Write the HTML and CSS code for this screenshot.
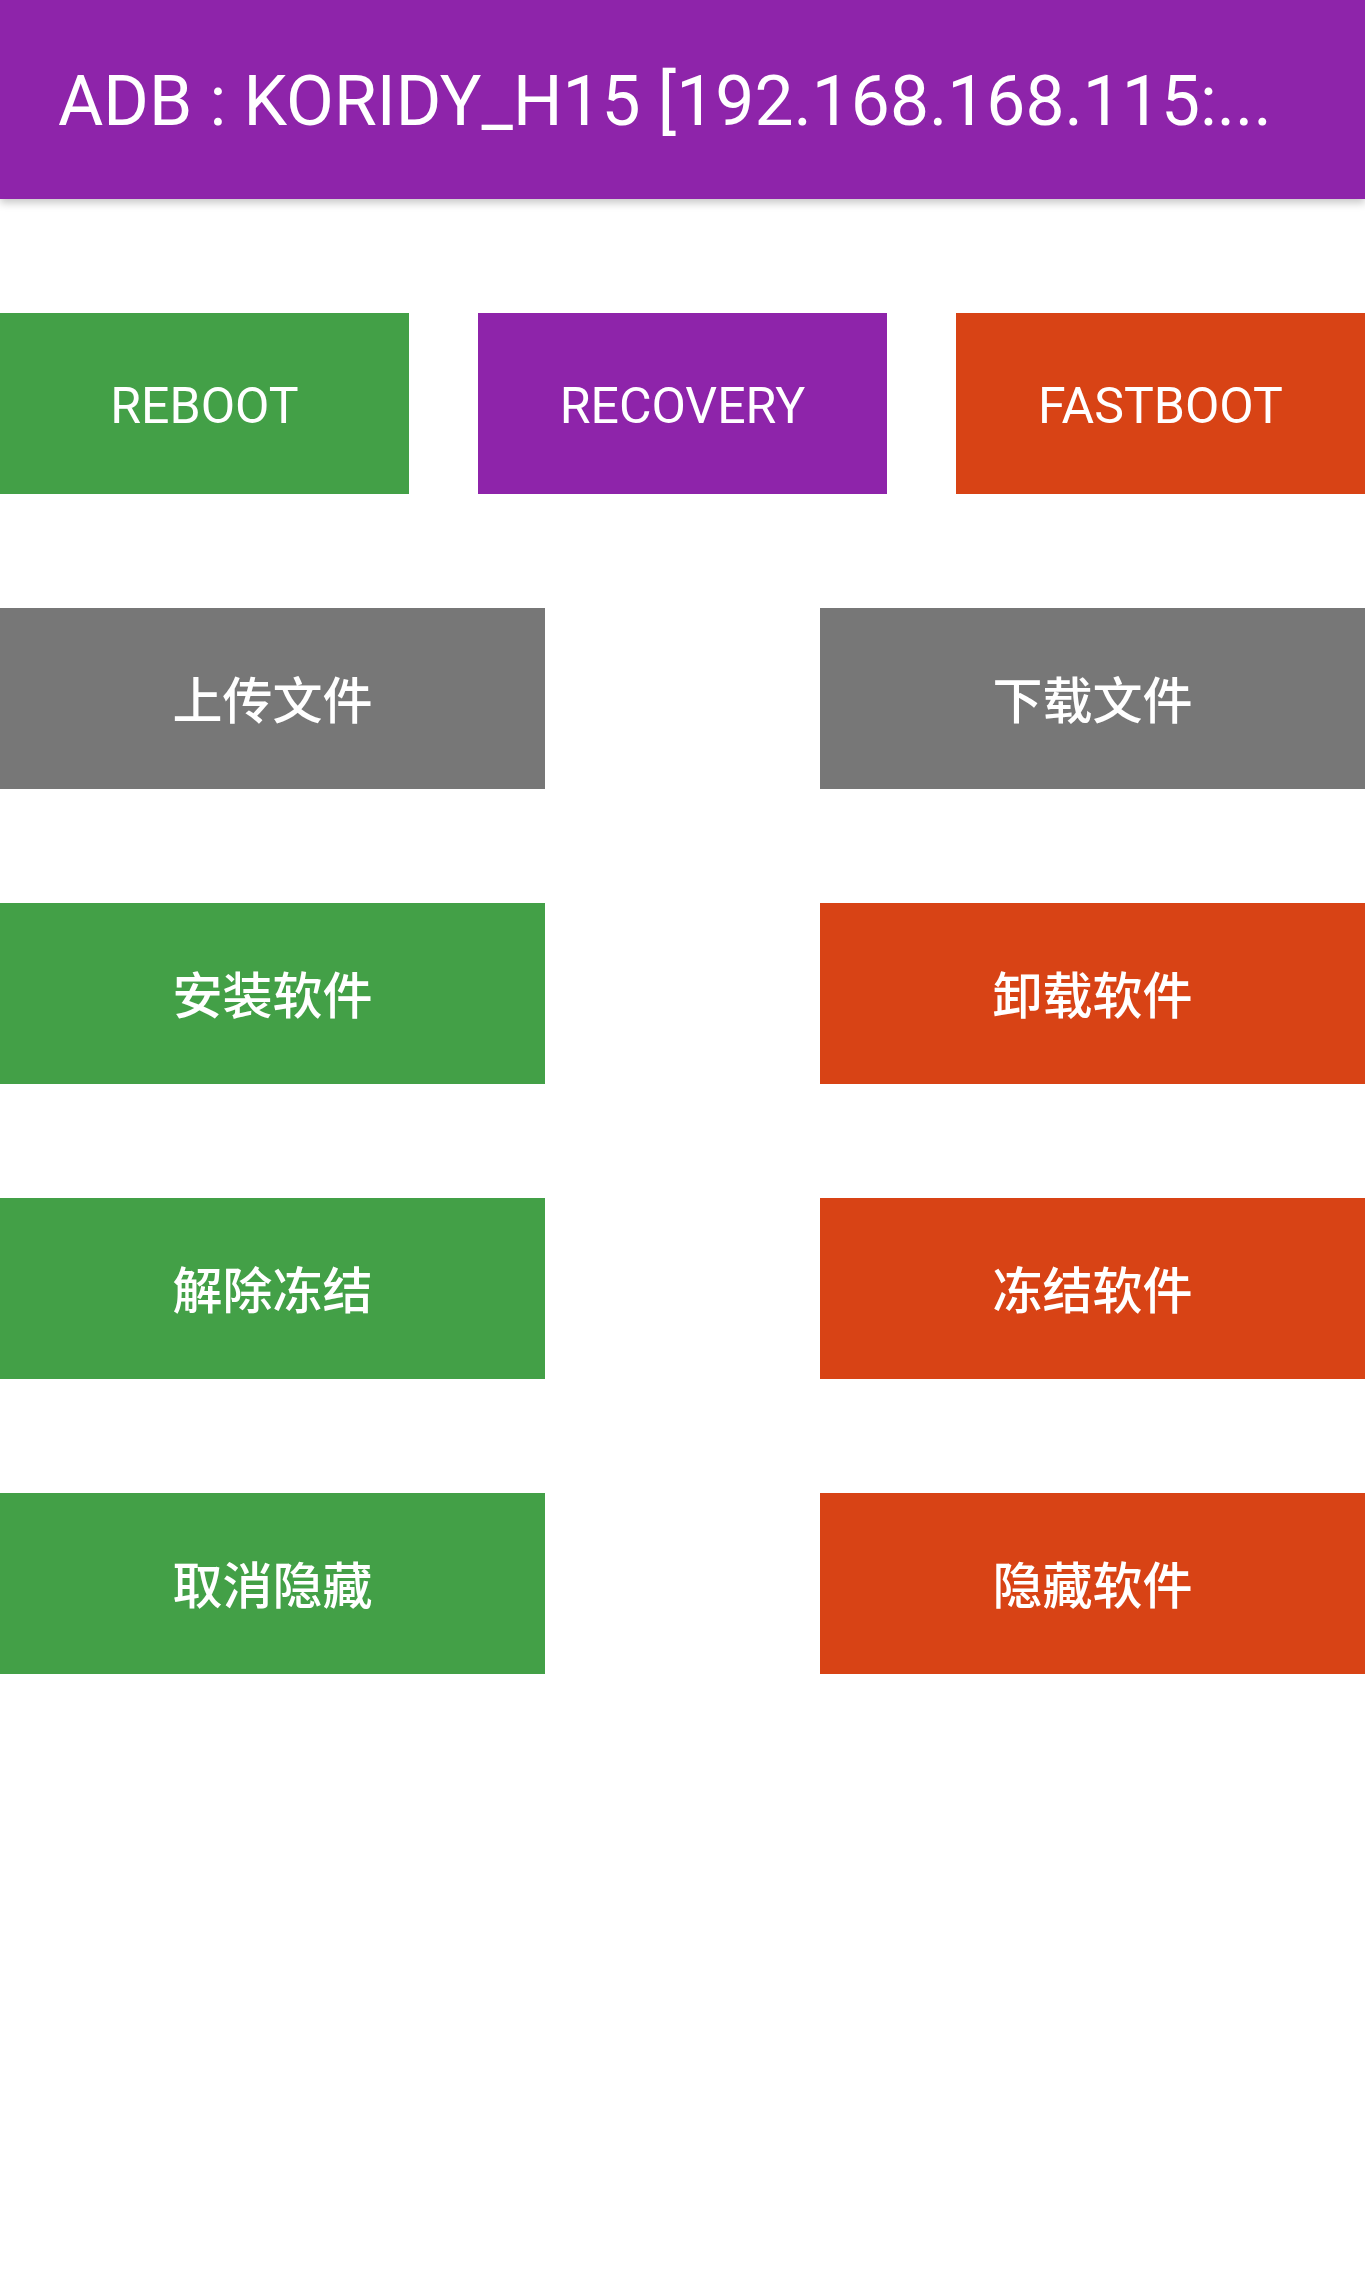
FILE: index.html
```html
<!DOCTYPE html>
<html lang="zh">
<head>
<meta charset="utf-8">
<title>ADB</title>
<link rel="stylesheet" href="styles.css">
</head>
<body>
<header class="appbar">
  <h1 class="appbar-title">ADB : KORIDY_H15 [192.168.168.115:...</h1>
</header>
<main class="content">
  <div class="row row-3">
    <button class="btn green">REBOOT</button>
    <button class="btn purple">RECOVERY</button>
    <button class="btn orange">FASTBOOT</button>
  </div>
  <div class="row row-2">
    <button class="btn gray cjk">上传文件</button>
    <button class="btn gray cjk">下载文件</button>
  </div>
  <div class="row row-2">
    <button class="btn green cjk">安装软件</button>
    <button class="btn orange cjk">卸载软件</button>
  </div>
  <div class="row row-2">
    <button class="btn green cjk">解除冻结</button>
    <button class="btn orange cjk">冻结软件</button>
  </div>
  <div class="row row-2">
    <button class="btn green cjk">取消隐藏</button>
    <button class="btn orange cjk">隐藏软件</button>
  </div>
</main>
</body>
</html>
```
FILE: styles.css
```css
* { box-sizing: border-box; }
html, body {
  margin: 0;
  padding: 0;
  background: #ffffff;
  font-family: Roboto, "Noto Sans CJK SC", sans-serif;
}
.appbar {
  height: 199px;
  background: #8e24aa;
  display: flex;
  align-items: center;
  padding-left: 58px;
  box-shadow: 0 4px 8px rgba(0, 0, 0, 0.22);
  position: relative;
  z-index: 1;
}
.appbar-title {
  margin: 0;
  color: #ffffff;
  font-weight: 400;
  font-size: 69.5px;
  line-height: 1;
  white-space: nowrap;
  padding-top: 4px;
}
.content {
  display: flex;
  flex-direction: column;
  gap: 114px;
  padding-top: 114px;
}
.row {
  display: flex;
  justify-content: space-between;
}
.btn {
  height: 181px;
  border: none;
  margin: 0;
  padding: 4px 0 0;
  color: #ffffff;
  font-family: Roboto, "Noto Sans CJK SC", sans-serif;
  font-size: 50px;
  font-weight: 400;
  display: flex;
  align-items: center;
  justify-content: center;
}
.row-3 .btn { width: 409px; }
.row-2 .btn { width: 545px; }
.btn.cjk {
  font-family: "Noto Sans CJK SC", sans-serif;
  font-size: 50px;
  font-weight: 500;
  padding: 0 0 3px;
}
.green { background: #43a047; }
.purple { background: #8e24aa; }
.orange { background: #d84315; }
.gray { background: #777777; }
```
